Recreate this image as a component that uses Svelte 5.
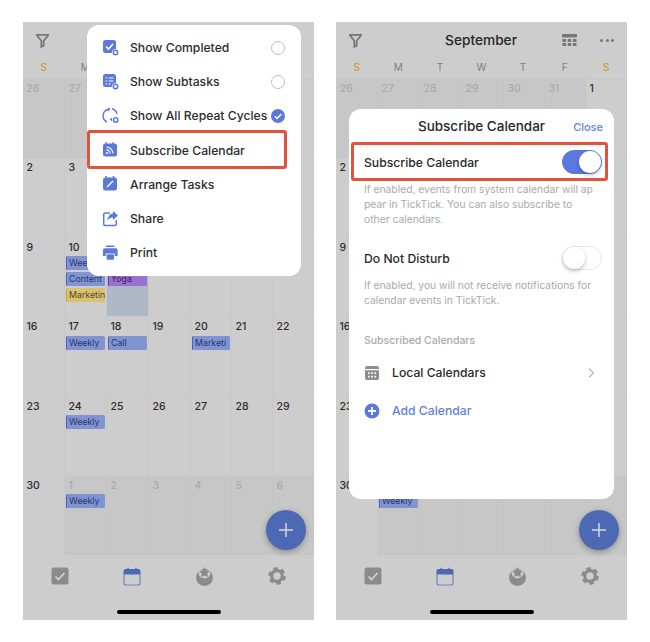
<script>
  const weekdays = [
    { label: 'S', weekend: true },
    { label: 'M' },
    { label: 'T' },
    { label: 'W' },
    { label: 'T' },
    { label: 'F' },
    { label: 'S', weekend: true }
  ]

  const weeks = [
    [{ d: 26, old: 1 }, { d: 27, old: 1 }, { d: 28, old: 1 }, { d: 29, old: 1 }, { d: 30, old: 1 }, { d: 31, old: 1 }, { d: 1 }],
    [{ d: 2 }, { d: 3 }, { d: 4 }, { d: 5 }, { d: 6 }, { d: 7 }, { d: 8 }],
    [
      { d: 9 },
      { d: 10, ev: [['Weekly', 'blue'], ['Content', 'blue'], ['Marketin', 'yellow']] },
      { d: 11, today: 1, ev: [['', 'none'], ['Yoga', 'purple']] },
      { d: 12 }, { d: 13 }, { d: 14 }, { d: 15 }
    ],
    [
      { d: 16 },
      { d: 17, ev: [['Weekly', 'blue']] },
      { d: 18, ev: [['Call', 'blue']] },
      { d: 19 },
      { d: 20, ev: [['Marketi', 'blue']] },
      { d: 21 }, { d: 22 }
    ],
    [{ d: 23 }, { d: 24, ev: [['Weekly', 'blue']] }, { d: 25 }, { d: 26 }, { d: 27 }, { d: 28 }, { d: 29 }],
    [
      { d: 30 },
      { d: 1, old: 1, ev: [['Weekly', 'blue']] },
      { d: 2, old: 1 }, { d: 3, old: 1 }, { d: 4, old: 1 }, { d: 5, old: 1 }, { d: 6, old: 1 }
    ]
  ]

  const menu = [
    { id: 'completed', label: 'Show Completed', radio: 'off' },
    { id: 'subtasks', label: 'Show Subtasks', radio: 'off' },
    { id: 'repeat', label: 'Show All Repeat Cycles', radio: 'on' },
    { id: 'subscribe', label: 'Subscribe Calendar', marked: true },
    { id: 'arrange', label: 'Arrange Tasks' },
    { id: 'share', label: 'Share' },
    { id: 'print', label: 'Print' }
  ]
</script>

{#snippet menuIcon(id)}
  <svg class="menu-icon" width="18" height="18" viewBox="0 0 18 18">
    {#if id === 'completed'}
      <rect x="1" y="1" width="13" height="13" rx="2.5" fill="#5b79dd" />
      <path d="M4 7.5l2.5 2.5 4.5-5" fill="none" stroke="#fff" stroke-width="1.6" />
      <circle cx="13.5" cy="13.5" r="3.6" fill="#fff" />
      <circle cx="13.5" cy="13.5" r="2.2" fill="none" stroke="#5b79dd" stroke-width="1.5" />
    {:else if id === 'subtasks'}
      <rect x="1" y="1" width="13" height="13" rx="2.5" fill="#5b79dd" />
      <path d="M3.5 5h1.5M6.5 5h5M3.5 8h1.5M6.5 8h5M3.5 11h1.5M6.5 11h2" stroke="#fff" stroke-width="1.2" />
      <circle cx="13.5" cy="13.5" r="3.6" fill="#fff" />
      <circle cx="13.5" cy="13.5" r="2.2" fill="none" stroke="#5b79dd" stroke-width="1.5" />
    {:else if id === 'repeat'}
      <path d="M5 15A6.8 6.8 0 0 1 6.5 2.2M10 1.8a6.8 6.8 0 0 1 5 5.2" fill="none" stroke="#5b79dd" stroke-width="1.4" />
      <path d="M6 .2v4l2.500-2zM7.500 12.500l2.500-1.800v3.600z" fill="#5b79dd" />
      <circle cx="13.700" cy="13" r="2.200" fill="none" stroke="#5b79dd" stroke-width="1.500" />
    {:else if id === 'subscribe'}
      <path d="M4 3V1.200M11 3V1.200" stroke="#5b79dd" stroke-width="1.500" />
      <rect x="1" y="2.500" width="14" height="13" rx="2.500" fill="#5b79dd" />
      <circle cx="5" cy="12" r="1.100" fill="#fff" />
      <path d="M4.500 8.800a3.600 3.600 0 0 1 3.600 3.600M4.500 6a6.300 6.300 0 0 1 6.300 6.300" fill="none" stroke="#fff" stroke-width="1.200" />
    {:else if id === 'arrange'}
      <path d="M4 3V1M11.500 3V1" stroke="#5b79dd" stroke-width="1.600" />
      <rect x="1" y="2.500" width="14" height="13" rx="2.500" fill="#5b79dd" />
      <path d="M5 12l6-6" stroke="#fff" stroke-width="1.500" />
    {:else if id === 'share'}
      <path d="M8 3H3.500A1.800 1.800 0 0 0 1.700 4.800v9A1.800 1.800 0 0 0 3.500 15.600h9a1.800 1.800 0 0 0 1.800-1.800V10" fill="none" stroke="#5b79dd" stroke-width="1.500" />
      <path d="M11 1l5 4.500-5 4.500V7.500C8.500 7.500 6.500 8.500 5.500 11 5.500 7 7.500 4 11 3.500z" fill="#5b79dd" />
    {:else}
      <path d="M4 1.500h8.500v1.500H4z" fill="#5b79dd" />
      <path d="M2.800 4.300h11a1.800 1.800 0 0 1 1.800 1.800v6h-2.800V9.500H3.800v2.600H1V6.100a1.800 1.800 0 0 1 1.800-1.800z" fill="#5b79dd" />
      <rect x="4.600" y="10.300" width="7.400" height="5.400" rx="1" fill="#5b79dd" />
    {/if}
  </svg>
{/snippet}

{#snippet phone()}
  <header class="top">
    <svg class="filter" width="15" height="15" viewBox="0 0 15 15">
      <path d="M1 1.800h13M2 2.500l4.300 5.300v6l2.400-1.200V7.800L13 2.500" fill="none" stroke="#777" stroke-width="1.800" />
    </svg>
    <span class="month">September</span>
    <div class="top-right">
      <svg width="15" height="13" viewBox="0 0 15 13">
        <rect x="0" y="0" width="15" height="3.400" rx=".8" fill="#777" />
        {#each [5, 9] as y}
          {#each [0.500, 5.700, 10.900] as x}
            <rect {x} {y} width="3.600" height="3" rx=".6" fill="#777" />
          {/each}
        {/each}
      </svg>
      <span class="dots"><i></i><i></i><i></i></span>
    </div>
  </header>

  <div class="weekdays">
    {#each weekdays as day}
      <span class:weekend={day.weekend}>{day.label}</span>
    {/each}
  </div>

  <div class="grid">
    {#each weeks as week}
      {#each week as cell}
        <div class="cell" class:old={cell.old} class:today={cell.today}>
          <span class="num">{cell.d}</span>
          {#each cell.ev ?? [] as [title, tone]}
            <div class="event {tone}">{title}</div>
          {/each}
        </div>
      {/each}
    {/each}
  </div>

  <button class="fab" aria-label="Add">
    <svg width="14" height="14" viewBox="0 0 14 14"><path d="M7 0v14M0 7h14" stroke="#d8d8d8" stroke-width="1.500" /></svg>
  </button>

  <nav class="tabs">
    <svg width="18" height="18" viewBox="0 0 18 18">
      <rect x="0.500" y="0.500" width="17" height="17" rx="2.500" fill="#8b8b8b" />
      <path d="M4.500 9.500l3 3 6-6.500" fill="none" stroke="#d4d4d4" stroke-width="1.600" />
    </svg>
    <svg width="18" height="19" viewBox="0 0 18 19">
      <path d="M5 3V.8M13 3V.8" stroke="#4d69b4" stroke-width="1.300" />
      <path d="M.5 7.500V4A2 2 0 0 1 2.500 2h13a2 2 0 0 1 2 2v3.500z" fill="#4d69b4" />
      <path d="M1 7v9a2 2 0 0 0 2 2h12a2 2 0 0 0 2-2V7" fill="none" stroke="#6d86c8" stroke-width="1.200" />
    </svg>
    <svg width="19" height="19" viewBox="0 0 19 19">
      <circle cx="9.500" cy="10.500" r="8.500" fill="#8b8b8b" />
      <path d="M3.500 3h12v2.500a6 6 0 0 1-12 0z" fill="#cdcdcd" />
      <path d="M9.500 0l1.800 3.200 3.500.7-2.400 2.600.4 3.500-3.300-1.500-3.300 1.500.4-3.500-2.400-2.600 3.500-.7z" fill="#8b8b8b" />
    </svg>
    <svg width="18" height="18" viewBox="0 0 18 18">
      <circle cx="9" cy="9" r="5.300" fill="none" stroke="#8b8b8b" stroke-width="3.200" />
      <circle cx="9" cy="9" r="7.600" fill="none" stroke="#8b8b8b" stroke-width="2.400" stroke-dasharray="4.500 3.460" />
    </svg>
  </nav>
  <div class="home-bar"></div>
{/snippet}

<div class="page">
  <section class="phone">
    {@render phone()}
    <div class="menu">
      {#each menu as item}
        <div class="menu-row">
          {@render menuIcon(item.id)}
          <span class="menu-label">{item.label}</span>
          {#if item.radio === 'off'}
            <span class="radio"></span>
          {:else if item.radio === 'on'}
            <svg class="radio-on" width="14" height="14" viewBox="0 0 14 14">
              <circle cx="7" cy="7" r="7" fill="#5b79dd" />
              <path d="M3.800 7.200l2.300 2.300 4.200-4.500" fill="none" stroke="#fff" stroke-width="1.500" />
            </svg>
          {/if}
          {#if item.marked}<div class="mark"></div>{/if}
        </div>
      {/each}
    </div>
  </section>

  <section class="phone">
    {@render phone()}
    <div class="modal">
      <div class="modal-head">
        <h2>Subscribe Calendar</h2>
        <span class="close">Close</span>
      </div>

      <div class="setting">
        <span>Subscribe Calendar</span>
        <span class="toggle on"><i></i></span>
        <div class="mark"></div>
      </div>
      <p class="hint">If enabled, events from system calendar will ap<br />pear in TickTick. You can also subscribe to<br />other calendars.</p>

      <div class="setting second">
        <span>Do Not Disturb</span>
        <span class="toggle"><i></i></span>
      </div>
      <p class="hint">If enabled, you will not receive notifications for<br />calendar events in TickTick.</p>

      <div class="section-title">Subscribed Calendars</div>

      <div class="list-row">
        <svg width="16" height="16" viewBox="0 0 16 16">
          <path d="M1 4V3a2 2 0 0 1 2-2h10a2 2 0 0 1 2 2v1z" fill="#8d8d8d" />
          <path d="M1 5.200h14V13a2 2 0 0 1-2 2H3a2 2 0 0 1-2-2z" fill="#8d8d8d" />
          {#each [7.300, 10.800] as y}
            {#each [4, 7.200, 10.400] as x}
              <rect {x} {y} width="1.700" height="1.700" fill="#fff" />
            {/each}
          {/each}
        </svg>
        <span>Local Calendars</span>
        <svg class="chevron" width="7" height="10" viewBox="0 0 7 10"><path d="M1 .8L5.500 5 1 9.200" fill="none" stroke="#b5b5b5" stroke-width="1.200" /></svg>
      </div>

      <div class="list-row add">
        <svg width="16" height="16" viewBox="0 0 16 16">
          <circle cx="8" cy="8" r="7.500" fill="#5b79dd" />
          <path d="M8 4v8M4 8h8" stroke="#fff" stroke-width="1.800" />
        </svg>
        <span>Add Calendar</span>
      </div>
    </div>
  </section>
</div>

<style>
  :global(body) {
    background: #fff;
  }

  .page {
    display: flex;
    gap: 22px;
    padding: 22px 0 0 23px;
    font-family: Inter, "Liberation Sans", sans-serif;
    color: #222;
  }

  .phone {
    position: relative;
    width: 291px;
    height: 598px;
    background: #cdcdcd;
    overflow: hidden;
    flex: none;
  }

  /* top bar */
  .top {
    height: 36px;
    display: grid;
    grid-template-columns: 1fr auto 1fr;
    align-items: center;
    padding: 0 13px 0 12px;
    box-sizing: border-box;
  }
  .month {
    font-size: 13.700px;
    font-weight: 500;
    color: #262626;
  }
  .top-right {
    display: flex;
    align-items: center;
    justify-content: flex-end;
    gap: 23px;
  }
  .dots {
    display: flex;
    gap: 2.500px;
  }
  .dots i {
    width: 3px;
    height: 3px;
    border-radius: 50%;
    background: #777;
  }

  .weekdays {
    height: 20px;
    display: grid;
    grid-template-columns: repeat(7, 1fr);
    text-align: center;
    font-size: 10px;
    line-height: 19px;
    color: #7f7f7f;
  }
  .weekdays .weekend {
    color: #d29a2e;
    font-weight: 500;
  }

  /* calendar */
  .grid {
    display: grid;
    grid-template-columns: 42px 42px 42px 42px 41px 41px 41px;
    grid-auto-rows: 79.400px;
    border-top: 1px solid #c6c6c6;
  }
  .cell {
    padding: 0 1px;
    border-right: 1px solid #c8c8c8;
    border-bottom: 1px solid #c8c8c8;
    min-width: 0;
    overflow: hidden;
  }
  .cell.old {
    background: #c7c7c7;
    border-color: #c4c4c4;
  }
  .cell.today {
    background: #b0b7c6;
  }
  .num {
    display: block;
    height: 18.500px;
    padding-left: 2.500px;
    font-size: 10.500px;
    font-weight: 500;
    line-height: 19px;
    color: #2c2c2c;
  }
  .cell.old .num {
    color: #aaaaaa;
  }
  .event {
    height: 14px;
    margin-bottom: 2px;
    padding-left: 2px;
    border-left: 1.500px solid transparent;
    border-radius: 1.500px;
    font-size: 8.800px;
    line-height: 14px;
    white-space: nowrap;
    overflow: hidden;
  }
  .event.blue {
    background: #8094d2;
    border-color: #4560c0;
    color: #27346a;
  }
  .event.yellow {
    background: #d8c272;
    border-color: #d6a51c;
    color: #54491f;
  }
  .event.purple {
    background: #9c70d2;
    border-color: #6b2fc0;
    color: #35204f;
  }

  .fab {
    position: absolute;
    right: 8px;
    top: 488px;
    width: 40px;
    height: 40px;
    padding: 0;
    border: none;
    border-radius: 50%;
    background: #4d69b4;
    box-shadow: 0 2px 6px rgba(0, 0, 0, 0.3);
    display: flex;
    align-items: center;
    justify-content: center;
  }

  .tabs {
    height: 38px;
    display: grid;
    grid-template-columns: repeat(4, 72.500px);
    padding: 2px 0 0 0.500px;
    justify-items: center;
    align-items: center;
  }
  .home-bar {
    width: 104px;
    height: 4px;
    margin: 15px auto 0;
    border-radius: 2px;
    background: #000;
  }

  /* left popup */
  .menu {
    position: absolute;
    left: 64px;
    top: 3px;
    width: 214px;
    height: 251px;
    padding-top: 5.500px;
    box-sizing: border-box;
    background: #fff;
    border-radius: 12px;
  }
  .menu-row {
    position: relative;
    height: 34.200px;
    display: flex;
    align-items: center;
    padding: 0 16px 0 15px;
  }
  .menu-icon {
    flex: none;
    margin-right: 10px;
  }
  .menu-label {
    flex: 1;
    font-size: 12.200px;
    font-weight: 500;
    color: #2c2c2c;
    white-space: nowrap;
  }
  .radio {
    width: 12px;
    height: 12px;
    border: 1px solid #bcbcbc;
    border-radius: 50%;
  }
  .radio-on {
    flex: none;
  }

  /* red annotation */
  .mark {
    position: absolute;
    border: 3px solid #e2533c;
    border-radius: 3px;
    box-sizing: border-box;
  }
  .menu-row .mark {
    left: 0;
    right: 14px;
    top: -3px;
    bottom: -2px;
  }
  .setting .mark {
    left: -13px;
    right: -6px;
    top: -1px;
    bottom: 0;
  }

  /* right dialog */
  .modal {
    position: absolute;
    left: 13px;
    top: 87px;
    width: 265px;
    height: 390px;
    padding: 0 12px 0 15px;
    box-sizing: border-box;
    background: #fff;
    border-radius: 12px;
  }
  .modal-head {
    position: relative;
    height: 34px;
    display: flex;
    align-items: center;
    justify-content: center;
    padding-right: 3px;
  }
  .modal-head h2 {
    margin: 0;
    font-size: 13.500px;
    font-weight: 500;
    color: #262626;
  }
  .close {
    position: absolute;
    right: -1px;
    top: 11px;
    font-size: 11px;
    font-weight: 500;
    color: #6283e4;
  }
  .setting {
    position: relative;
    height: 38px;
    display: flex;
    align-items: center;
    justify-content: space-between;
    font-size: 12.200px;
    font-weight: 500;
    color: #2a2a2a;
  }
  .setting.second {
    margin-top: 12px;
  }
  .toggle {
    width: 40px;
    height: 24px;
    box-sizing: border-box;
    border: 1px solid #e8e8e8;
    border-radius: 12px;
    background: #fff;
    display: flex;
    align-items: center;
  }
  .toggle i {
    width: 22px;
    height: 22px;
    border-radius: 50%;
    background: #fff;
    box-shadow: 0 2px 4px rgba(0, 0, 0, 0.25);
  }
  .toggle.on {
    background: #5b79dd;
    border-color: #5b79dd;
    justify-content: flex-end;
  }
  .hint {
    margin: 1px 0 0;
    font-size: 10.300px;
    line-height: 15px;
    color: #a9a9a9;
    white-space: nowrap;
  }
  .section-title {
    margin-top: 25px;
    font-size: 10.500px;
    font-weight: 500;
    line-height: 15px;
    color: #a9a9a9;
  }
  .list-row {
    height: 38px;
    display: flex;
    align-items: center;
    gap: 12px;
    font-size: 12.200px;
    font-weight: 500;
    color: #2a2a2a;
  }
  .section-title + .list-row {
    margin-top: 5.500px;
  }
  .list-row span {
    flex: 1;
  }
  .chevron {
    margin-right: 7px;
  }
  .list-row.add {
    color: #5f80e2;
  }
</style>
